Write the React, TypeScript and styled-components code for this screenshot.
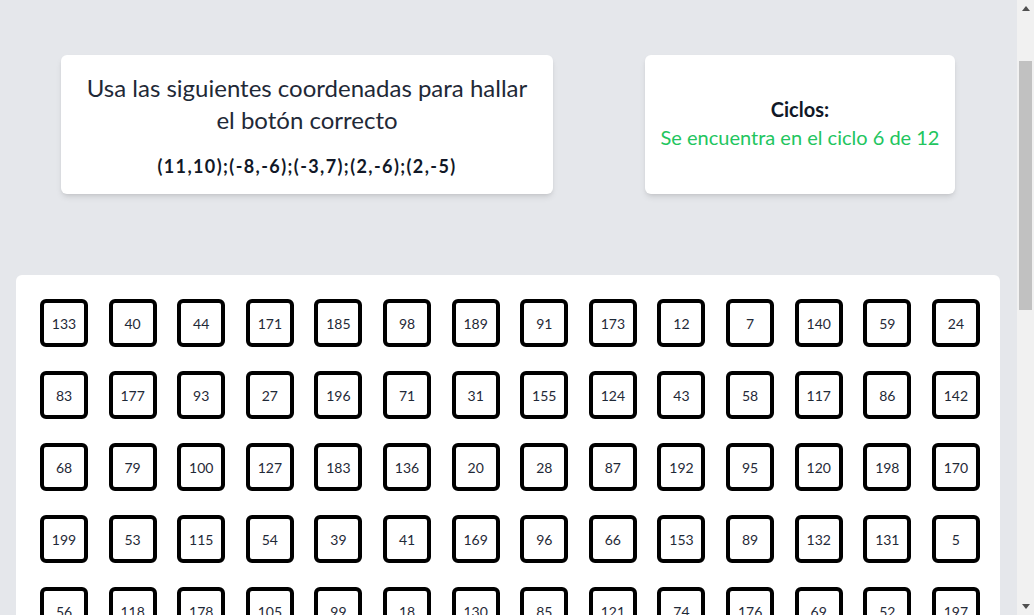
import React from "react";
import styled, { createGlobalStyle } from "styled-components";

const GlobalStyle = createGlobalStyle`
  html, body {
    margin: 0;
    padding: 0;
    background: #e5e7eb;
    font-family: "Segoe UI", Lato, "Noto Sans", sans-serif;
    color: #1f2937;
  }
  body {
    padding-right: 17px;
  }
  * { box-sizing: border-box; }
`;

const Page = styled.main`
  padding: 55px 17px 40px 16px;
  display: flex;
  flex-direction: column;
  gap: 81px;
`;

const TopRow = styled.section`
  display: flex;
  justify-content: space-between;
  padding: 0 45px 0 45px;
`;

const Card = styled.div<{ $width: number; $centered?: boolean }>`
  width: ${(p) => p.$width}px;
  height: 139px;
  background: #ffffff;
  border-radius: 6px;
  box-shadow: 0 4px 6px -1px rgba(0, 0, 0, 0.1), 0 2px 4px -2px rgba(0, 0, 0, 0.1);
  display: flex;
  flex-direction: column;
  align-items: center;
  justify-content: ${(p) => (p.$centered ? "center" : "flex-start")};
  padding-top: ${(p) => (p.$centered ? "0" : "17px")};
  padding-bottom: ${(p) => (p.$centered ? "4px" : "0")};
  text-align: center;
`;

const Instruction = styled.h2`
  margin: 0;
  font-size: 24px;
  line-height: 32px;
  font-weight: 400;
  color: #1f2937;
`;

const Coords = styled.p`
  margin: 16px 0 0 0;
  font-size: 18px;
  line-height: 28px;
  font-weight: 700;
  letter-spacing: 1.4px;
  color: #111827;
`;

const CycleTitle = styled.h3`
  margin: 0;
  font-size: 20px;
  line-height: 28px;
  font-weight: 700;
  color: #111827;
`;

const CycleText = styled.p`
  margin: 0;
  font-size: 20px;
  line-height: 28px;
  color: #22c55e;
`;

const Board = styled.section`
  background: #ffffff;
  border-radius: 6px;
  padding: 24px 20px 24px 24px;
  display: grid;
  grid-template-columns: repeat(14, 48px);
  justify-content: space-between;
  row-gap: 24px;
`;

const NumButton = styled.button`
  width: 48px;
  height: 48px;
  border: 4px solid #000000;
  border-radius: 6px;
  background: #ffffff;
  font-family: inherit;
  font-size: 14px;
  color: #1f2937;
  padding: 0;
  display: flex;
  align-items: center;
  justify-content: center;
  cursor: pointer;
`;

const ScrollTrack = styled.div`
  position: fixed;
  top: 0;
  right: 0;
  width: 17px;
  height: 100vh;
  background: #f1f1f1;
  display: flex;
  flex-direction: column;
  align-items: center;
`;

const ArrowBox = styled.div`
  height: 17px;
  width: 17px;
  display: flex;
  align-items: center;
  justify-content: center;
`;

const Thumb = styled.div`
  margin-top: 44px;
  width: 13px;
  height: 249px;
  background: #c1c1c1;
`;

const Spacer = styled.div`
  flex: 1;
`;

const Arrow = ({ down }: { down?: boolean }) => (
  <svg width="8" height="5" viewBox="0 0 8 5">
    <path d={down ? "M0 0 L8 0 L4 5 Z" : "M0 5 L8 5 L4 0 Z"} fill="#505050" />
  </svg>
);

const shown = [
  133, 40, 44, 171, 185, 98, 189, 91, 173, 12, 7, 140, 59, 24,
  83, 177, 93, 27, 196, 71, 31, 155, 124, 43, 58, 117, 86, 142,
  68, 79, 100, 127, 183, 136, 20, 28, 87, 192, 95, 120, 198, 170,
  199, 53, 115, 54, 39, 41, 169, 96, 66, 153, 89, 132, 131, 5,
  56, 118, 178, 105, 99, 18, 130, 85, 121, 74, 176, 69, 52, 197,
];

const rest: number[] = [];
for (let i = 0; i < 200; i++) {
  const n = ((i * 73) % 200) + 1;
  if (!shown.includes(n)) rest.push(n);
}
const numbers = [...shown, ...rest];

export default function App() {
  return (
    <>
      <GlobalStyle />
      <Page>
        <TopRow>
          <Card $width={492}>
            <Instruction>
              Usa las siguientes coordenadas para hallar
              <br />
              el botón correcto
            </Instruction>
            <Coords>(11,10);(-8,-6);(-3,7);(2,-6);(2,-5)</Coords>
          </Card>
          <Card $width={310} $centered>
            <CycleTitle>Ciclos:</CycleTitle>
            <CycleText>Se encuentra en el ciclo 6 de 12</CycleText>
          </Card>
        </TopRow>
        <Board>
          {numbers.map((n) => (
            <NumButton key={n}>{n}</NumButton>
          ))}
        </Board>
      </Page>
      <ScrollTrack aria-hidden>
        <ArrowBox>
          <Arrow />
        </ArrowBox>
        <Thumb />
        <Spacer />
        <ArrowBox>
          <Arrow down />
        </ArrowBox>
      </ScrollTrack>
    </>
  );
}
